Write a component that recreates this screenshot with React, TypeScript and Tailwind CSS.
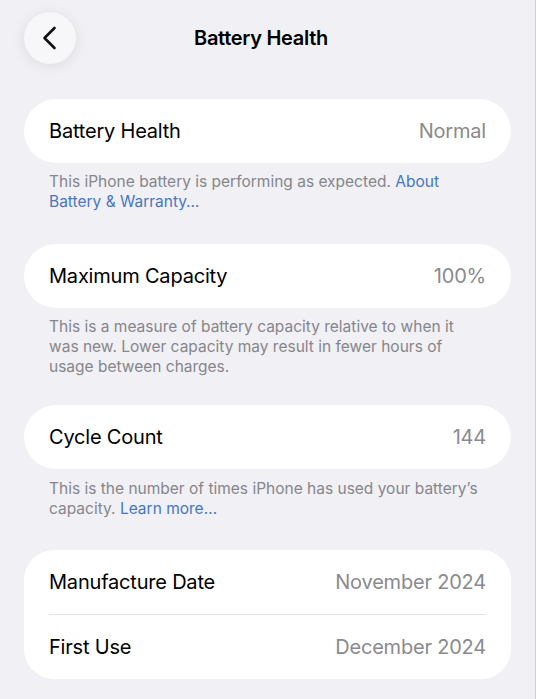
import React from "react";

const font = { fontFamily: "Inter, 'Noto Sans', sans-serif" };

function Row({ label, value }: { label: string; value: string }) {
  return (
    <div className="flex h-16 items-center justify-between px-[25px]">
      <span className="text-[20px] text-black tracking-[-0.2px]">{label}</span>
      <span className="text-[20px] text-[#8a8a8e] tracking-[-0.2px]">{value}</span>
    </div>
  );
}

function Footer({ children, className = "" }: { children: React.ReactNode; className?: string }) {
  return (
    <p className={`px-[25px] text-[15.5px] leading-[20px] text-[#86868b] ${className}`}>{children}</p>
  );
}

export default function App() {
  return (
    <div style={font} className="min-h-[699px] w-full bg-[#f0f0f5] border-r border-[#cfcfd3] px-6 pt-3">
      <div className="grid grid-cols-[52px_1fr_52px] items-center h-[52px]">
        <button className="flex h-[52px] w-[52px] items-center justify-center rounded-full bg-[#f7f7f9] shadow-[0_2px_14px_rgba(0,0,0,0.09)]">
          <svg width="16" height="24" viewBox="0 0 16 24" fill="none">
            <path d="M12.5 2 L2.5 12 L12.5 22" stroke="#111" strokeWidth="2.6" strokeLinecap="round" strokeLinejoin="round" />
          </svg>
        </button>
        <h1 className="mr-[13px] text-center text-[20px] font-semibold text-black tracking-[-0.3px]">Battery Health</h1>
        <div />
      </div>

      <div className="mt-[35px] rounded-[32px] bg-white">
        <Row label="Battery Health" value="Normal" />
      </div>
      <Footer className="mt-[9px]">
        This iPhone battery is performing as expected. <span className="text-[#4677c2]">About Battery &amp; Warranty…</span>
      </Footer>

      <div className="mt-8 rounded-[32px] bg-white">
        <Row label="Maximum Capacity" value="100%" />
      </div>
      <Footer className="mt-[9px]">
        This is a measure of battery capacity relative to when it was new. Lower capacity may result in fewer hours of usage between charges.
      </Footer>

      <div className="mt-7 rounded-[32px] bg-white">
        <Row label="Cycle Count" value="144" />
      </div>
      <Footer className="mt-[10px]">
        This is the number of times iPhone has used your battery’s capacity. <span className="text-[#4677c2]">Learn more…</span>
      </Footer>

      <div className="mt-[31px] rounded-[30px] bg-white">
        <Row label="Manufacture Date" value="November 2024" />
        <div className="mx-[25px] h-px bg-[#e3e3e6]" />
        <Row label="First Use" value="December 2024" />
      </div>
    </div>
  );
}
